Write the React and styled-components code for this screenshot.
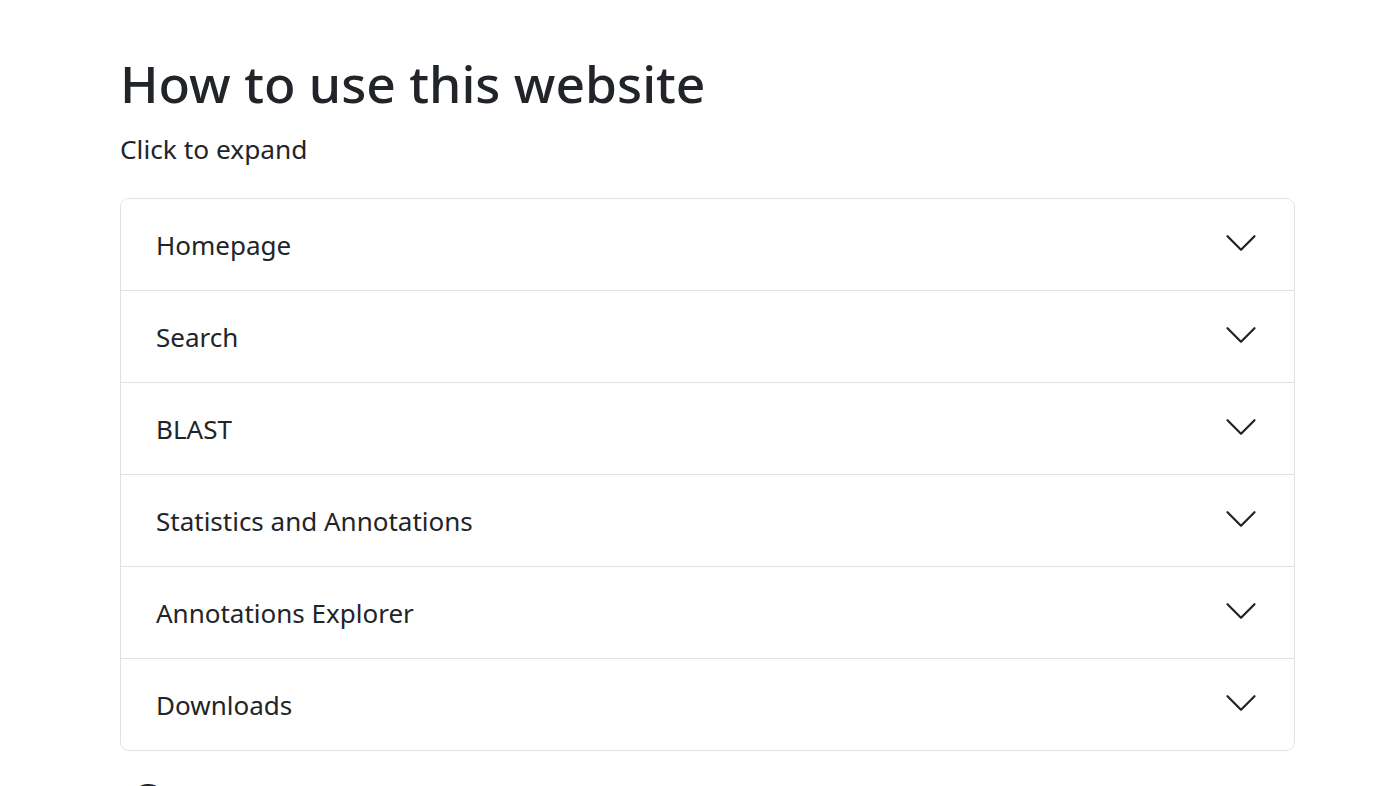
import React from 'react'
import styled, { createGlobalStyle } from 'styled-components'

const GlobalStyle = createGlobalStyle`
  body {
    margin: 0;
    background: #fff;
    color: #212529;
    font-family: "Noto Sans", "Open Sans", "Liberation Sans", sans-serif;
  }
`

const Page = styled.main`
  padding: 52px 81px 0 120px;
  overflow: hidden;
  height: 786px;
  box-sizing: border-box;
`

const Title = styled.h1`
  margin: 0;
  font-size: 51.6px;
  font-weight: 500;
  line-height: 62px;
`

const Lead = styled.p`
  margin: 16px 0 29px;
  font-size: 26.3px;
  line-height: 39px;
`

const Accordion = styled.div`
  border: 1px solid #dee2e6;
  border-radius: 9px;
  overflow: hidden;
`

const Item = styled.div`
  & + & {
    border-top: 1px solid #dee2e6;
  }
`

const Header = styled.button`
  display: flex;
  align-items: center;
  justify-content: space-between;
  width: 100%;
  height: 91px;
  padding: 0 35px;
  border: 0;
  background: #fff;
  color: #212529;
  font-family: inherit;
  font-size: 26px;
  text-align: left;
  cursor: pointer;
`

const Chevron = styled.svg`
  width: 36px;
  height: 36px;
  flex-shrink: 0;
  margin-top: -4px;
`

const NextTitle = styled.h2`
  margin: 19px 0 0 12px;
  font-size: 40px;
  font-weight: 500;
`

const sections = [
  'Homepage',
  'Search',
  'BLAST',
  'Statistics and Annotations',
  'Annotations Explorer',
  'Downloads',
]

const App = () => {
  return (
    <>
      <GlobalStyle />
      <Page>
        <Title>How to use this website</Title>
        <Lead>Click to expand</Lead>
        <Accordion>
          {sections.map((label) => (
            <Item key={label}>
              <Header type='button'>
                {label}
                <Chevron viewBox='0 0 16 16' fill='#212529'>
                  <path d='M1.646 4.646a.5.5 0 0 1 .708 0L8 10.293l5.646-5.647a.5.5 0 0 1 .708.708l-6 6a.5.5 0 0 1-.708 0l-6-6a.5.5 0 0 1 0-.708z' />
                </Chevron>
              </Header>
            </Item>
          ))}
        </Accordion>
        <NextTitle>Contact</NextTitle>
      </Page>
    </>
  )
}

export default App
